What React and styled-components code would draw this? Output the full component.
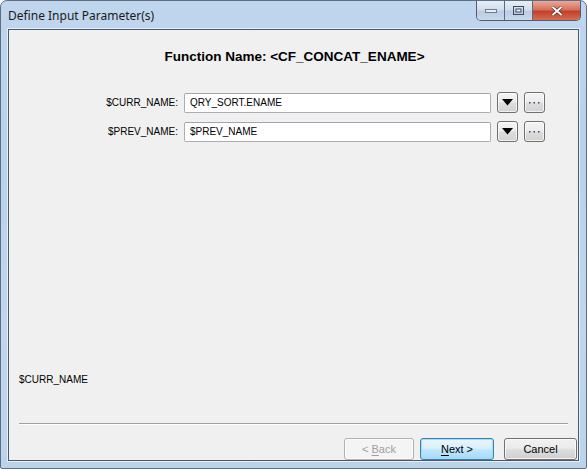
import React from 'react'
import styled, { createGlobalStyle } from 'styled-components'

const Global = createGlobalStyle`
    html, body {
        margin: 0;
        padding: 0;
        background: #ffffff;
    }
    body {
        font-family: "Liberation Sans", Arial, sans-serif;
    }
`;

const Window = styled.div`
    width: 587px;
    height: 469px;
    box-sizing: border-box;
    display: flex;
    flex-direction: column;
    border: 1px solid #5d6e82;
    border-radius: 7px 7px 2px 2px;
    background: linear-gradient(180deg, #c0d6ee 0%, #b9d1eb 30%, #c1d6ec 70%, #bcd3ea 100%);
    overflow: hidden;
`;

const TitleBar = styled.div`
    height: 28px;
    flex: none;
    display: flex;
    align-items: flex-start;
    justify-content: space-between;
    padding-left: 7px;
`;

const Title = styled.div`
    font-family: "Noto Sans", "DejaVu Sans", sans-serif;
    font-size: 12px;
    color: #1a1a1a;
    margin-top: 6px;
`;

const Caption = styled.div`
    display: flex;
    margin-right: 5px;
    border: 1px solid #4f5e72;
    border-top: none;
    border-radius: 0 0 5px 5px;
    overflow: hidden;
    height: 19px;
`;

const CapBtn = styled.div`
    width: ${({ w }) => w}px;
    display: flex;
    align-items: center;
    justify-content: center;
    border-left: ${({ first }) => first ? 'none' : '1px solid #5a6a80'};
    background: ${({ close }) => close
        ? 'linear-gradient(180deg, #e8a99c 0%, #d7715c 45%, #c2412b 55%, #d66d4f 100%)'
        : 'linear-gradient(180deg, #e6eef8 0%, #d2deec 45%, #bccde2 55%, #c9d8ea 100%)'};
`;

const Body = styled.div`
    flex: 1;
    display: flex;
    padding: 0 7px 7px 7px;
`;

const Panel = styled.div`
    flex: 1;
    display: flex;
    flex-direction: column;
    background: #f0f0f0;
    border: 1px solid #4a5a6c;
    box-shadow: 0 0 0 1px #e6eef7;
    font-size: 10px;
    color: #000;
`;

const Heading = styled.div`
    text-align: center;
    font-weight: bold;
    font-size: 13.5px;
    margin-top: 19px;
    height: 15px;
    padding-left: 2px;
`;

const Params = styled.div`
    margin-top: 28px;
    display: flex;
    flex-direction: column;
    gap: 8px;
`;

const Row = styled.div`
    display: flex;
    align-items: center;
    height: 21px;
`;

const Label = styled.div`
    width: 175px;
    text-align: right;
    padding-right: 6px;
    box-sizing: border-box;
    flex: none;
`;

const Input = styled.div`
    width: 307px;
    height: 20px;
    box-sizing: border-box;
    background: #fff;
    border: 1px solid #abadb3;
    border-top-color: #a1a6ae;
    border-radius: 2px;
    padding: 0 5px;
    display: flex;
    align-items: center;
    flex: none;
`;

const SmallBtn = styled.div`
    width: 21px;
    height: 21px;
    margin-left: ${({ gap }) => gap}px;
    box-sizing: border-box;
    border: 1px solid #707070;
    border-radius: 3px;
    background: linear-gradient(180deg, #f4f4f4 0%, #ececec 45%, #dcdcdc 55%, #d2d2d2 100%);
    box-shadow: inset 0 0 0 1px rgba(255,255,255,0.7);
    display: flex;
    align-items: center;
    justify-content: center;
    flex: none;
`;

const Status = styled.div`
    margin-top: auto;
    padding-left: 10px;
    margin-bottom: 38px;
`;

const Separator = styled.div`
    margin: 0 10px;
    height: 1px;
    background: #a0a0a0;
    border-bottom: 1px solid #ffffff;
`;

const Buttons = styled.div`
    display: flex;
    justify-content: flex-end;
    padding: 13px 1px 0 0;
    height: 35px;
    box-sizing: border-box;
    flex: none;
`;

const Button = styled.div`
    width: ${({ w }) => w}px;
    height: 22px;
    margin-left: ${({ gap }) => gap}px;
    box-sizing: border-box;
    border-radius: 3px;
    display: flex;
    align-items: center;
    justify-content: center;
    font-size: 11px;
    white-space: pre;
    color: ${({ disabled }) => disabled ? '#a0a0a0' : '#000'};
    border: 1px solid ${({ disabled, primary }) => disabled ? '#adb2b5' : primary ? '#3c7fb1' : '#707070'};
    background: ${({ disabled, primary }) => disabled
        ? '#f4f4f4'
        : primary
            ? 'linear-gradient(180deg, #eaf6fd 0%, #d9f0fc 45%, #bee6fd 55%, #a7d9f5 100%)'
            : 'linear-gradient(180deg, #f2f2f2 0%, #ebebeb 45%, #dddddd 55%, #cfcfcf 100%)'};
    box-shadow: ${({ primary }) => primary ? 'inset 0 0 0 1px #9fdcf8' : 'inset 0 0 0 1px rgba(255,255,255,0.7)'};

    u {
        text-decoration: underline;
        text-underline-offset: 2px;
    }
`;

const Param = ({ name, value }) => (
    <Row>
        <Label>{name}:</Label>
        <Input>{value}</Input>
        <SmallBtn gap={6}>
            <svg width="11" height="7" viewBox="0 0 11 7">
                <path d="M0 0 H11 L5.5 6.5 Z" fill="#000" />
            </svg>
        </SmallBtn>
        <SmallBtn gap={6}>
            <svg width="11" height="3" viewBox="0 0 11 3">
                <rect x="0" y="1" width="1.5" height="1.5" fill="#3b4b6b" />
                <rect x="4.5" y="1" width="1.5" height="1.5" fill="#3b4b6b" />
                <rect x="9" y="1" width="1.5" height="1.5" fill="#3b4b6b" />
            </svg>
        </SmallBtn>
    </Row>
)

const App = () => {
    return (
        <>
            <Global />
            <Window>
                <TitleBar>
                    <Title>Define Input Parameter(s)</Title>
                    <Caption>
                        <CapBtn w={27} first>
                            <svg width="12" height="4" viewBox="0 0 12 4">
                                <rect x="0.5" y="0.5" width="11" height="3" fill="#e8eef6" stroke="#6b7a8e" />
                            </svg>
                        </CapBtn>
                        <CapBtn w={27}>
                            <svg width="11" height="9" viewBox="0 0 11 9">
                                <rect x="0.5" y="0.5" width="10" height="8" fill="none" stroke="#3d4a5c" />
                                <rect x="3" y="3" width="5" height="3" fill="#f0f4fa" stroke="#3d4a5c" />
                            </svg>
                        </CapBtn>
                        <CapBtn w={47} close>
                            <svg width="12" height="10" viewBox="0 0 12 10">
                                <path d="M1.5 1 L10.5 9 M10.5 1 L1.5 9" stroke="#4a2018" strokeWidth="3.2" />
                                <path d="M1.5 1 L10.5 9 M10.5 1 L1.5 9" stroke="#ffffff" strokeWidth="2" />
                            </svg>
                        </CapBtn>
                    </Caption>
                </TitleBar>
                <Body>
                    <Panel>
                        <Heading>Function Name: &lt;CF_CONCAT_ENAME&gt;</Heading>
                        <Params>
                            <Param name="$CURR_NAME" value="QRY_SORT.ENAME" />
                            <Param name="$PREV_NAME" value="$PREV_NAME" />
                        </Params>
                        <Status>$CURR_NAME</Status>
                        <Separator />
                        <Buttons>
                            <Button w={70} disabled>{'< '}<u>B</u>ack</Button>
                            <Button w={74} gap={6} primary><u>N</u>{'ext >'}</Button>
                            <Button w={73} gap={10}>Cancel</Button>
                        </Buttons>
                    </Panel>
                </Body>
            </Window>
        </>
    )
}

export default App
